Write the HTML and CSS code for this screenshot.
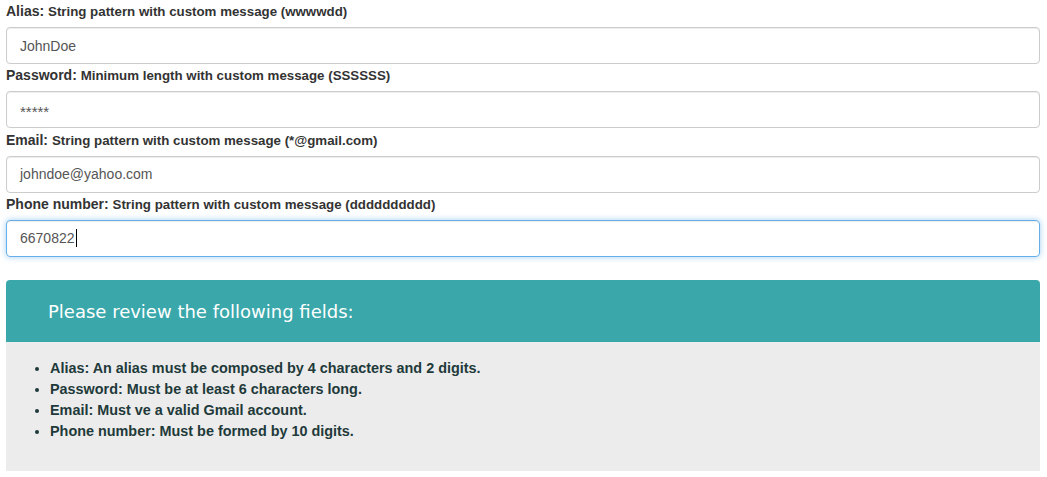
FILE: index.html
```html
<!DOCTYPE html>
<html lang="en">
<head>
<meta charset="utf-8">
<title>Validation form</title>
<link rel="stylesheet" href="styles.css">
</head>
<body>
<div class="page">
  <form class="form">
    <div class="group">
      <label class="label">Alias: <span class="hint">String pattern with custom message (wwwwdd)</span></label>
      <div class="control">JohnDoe</div>
    </div>
    <div class="group">
      <label class="label">Password: <span class="hint">Minimum length with custom message (SSSSSS)</span></label>
      <div class="control control-pass">*****</div>
    </div>
    <div class="group">
      <label class="label">Email: <span class="hint">String pattern with custom message (*@gmail.com)</span></label>
      <div class="control">johndoe@yahoo.com</div>
    </div>
    <div class="group">
      <label class="label">Phone number: <span class="hint">String pattern with custom message (dddddddddd)</span></label>
      <div class="control control-focus">6670822<span class="caret"></span></div>
    </div>
  </form>
  <div class="alert">
    <div class="alert-head">Please review the following fields:</div>
    <div class="alert-body">
      <ul class="errors">
        <li>Alias: An alias must be composed by 4 characters and 2 digits.</li>
        <li>Password: Must be at least 6 characters long.</li>
        <li>Email: Must ve a valid Gmail account.</li>
        <li>Phone number: Must be formed by 10 digits.</li>
      </ul>
    </div>
  </div>
</div>
</body>
</html>
```
FILE: styles.css
```css
html, body {
  margin: 0;
  padding: 0;
  background: #fff;
}
body {
  font-family: "Liberation Sans", Arial, sans-serif;
  color: #333;
}
.page {
  padding: 0 7px 0 6px;
}
.form {
  display: flex;
  flex-direction: column;
}
.group {
  display: flex;
  flex-direction: column;
  padding-bottom: 0.33px;
}
.label {
  display: block;
  height: 20px;
  font-size: 14px;
  font-weight: bold;
  line-height: 20px;
  margin: 1px 0 6px;
  color: #333;
  white-space: nowrap;
}
.hint {
  font-size: 13.3px;
  line-height: 20px;
}
.control {
  box-sizing: border-box;
  height: 37px;
  border: 1px solid #ccc;
  border-radius: 4px;
  padding: 0 13px;
  display: flex;
  align-items: center;
  font-size: 14px;
  color: #555;
  box-shadow: inset 0 1px 1px rgba(0,0,0,.075);
}
.control-pass {
  font-size: 15px;
  padding-top: 4px;
}
.control-focus {
  border-color: #66afe9;
  box-shadow: inset 0 1px 1px rgba(0,0,0,.075), 0 0 6px rgba(102,175,233,.6);
}
.caret {
  display: inline-block;
  width: 1px;
  height: 18px;
  background: #000;
  margin-left: 1px;
}
.alert {
  margin-top: 23px;
}
.alert-head {
  background: #3aa8ab;
  color: #fff;
  border-radius: 4px 4px 0 0;
  height: 62px;
  display: flex;
  align-items: center;
  padding-left: 42px;
  font-family: "DejaVu Sans", Verdana, sans-serif;
  font-size: 18px;
}
.alert-body {
  background: #ececec;
  padding: 16px 0 29px;
}
.errors {
  margin: 0;
  padding-left: 44px;
  font-size: 14.4px;
  font-weight: bold;
  line-height: 21px;
  color: #1f3a3a;
}
```
